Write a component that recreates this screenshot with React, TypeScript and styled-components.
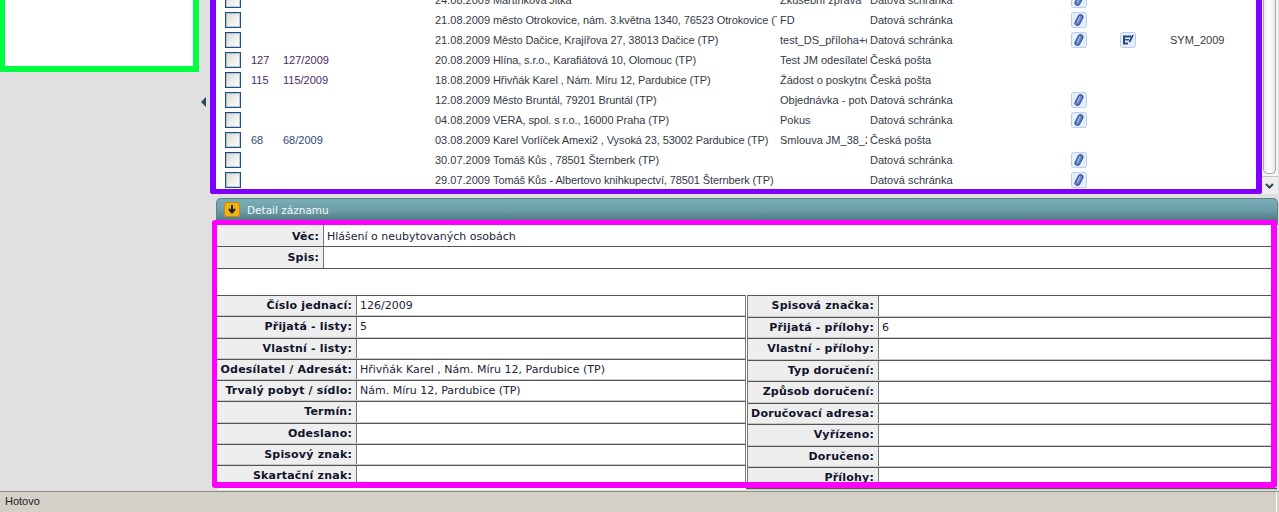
import React from "react";
import styled, { createGlobalStyle } from "styled-components";

const Global = createGlobalStyle`
  html, body { margin: 0; padding: 0; height: 100%; overflow: hidden; background: #e0e0e0; }
  #root { height: 100%; }
`;

const Page = styled.div`
  display: flex;
  flex-direction: column;
  width: 1279px;
  height: 512px;
`;
const Main = styled.div`
  flex: 1;
  min-height: 0;
  display: flex;
  background: #e0e0e0;
`;
const Side = styled.aside`
  width: 199px;
  flex: none;
`;
const SideBox = styled.div`
  box-sizing: border-box;
  width: 199px;
  height: 72px;
  background: #fff;
  border-style: solid;
  border-color: #00ff40;
  border-width: 0 6px 6px 5px;
`;
const Splitter = styled.div`
  width: 11px;
  flex: none;
  display: flex;
  align-items: flex-start;
  justify-content: center;
  padding: 97px 1px 0 0;
  box-sizing: border-box;
`;
const Content = styled.div`
  width: 1069px;
  flex: none;
  display: flex;
  flex-direction: column;
`;
const GridWrap = styled.div`
  display: flex;
  height: 194px;
  flex: none;
`;
const PurpleFrame = styled.div`
  box-sizing: border-box;
  width: 1052px;
  height: 194px;
  flex: none;
  background: #fff;
  border-style: solid;
  border-color: #8000ff;
  border-width: 0 6px 5px 6px;
  border-radius: 0 0 3px 3px;
  overflow: hidden;
  padding-left: 9px;
`;
const Rows = styled.div`
  margin-top: -10px;
`;
const Row = styled.div`
  display: grid;
  grid-template-columns: 26px 32px 152px 58px 287px 90px 201px 49px 50px 1fr;
  height: 20px;
  align-items: center;
  font: 11px/20px "Liberation Sans", Arial, sans-serif;
  color: #333a44;
`;
const Check = styled.span`
  display: block;
  box-sizing: border-box;
  width: 16px;
  height: 16px;
  border: 1px solid #1c5180;
  box-shadow: inset 0 0 0 1px rgba(60, 110, 160, 0.3);
  background: linear-gradient(135deg, #d8d8d3 0%, #efefeb 55%, #fbfbfb 100%);
`;
const Cell = styled.span<{ $tight?: boolean }>`
  white-space: nowrap;
  overflow: hidden;
  display: block;
  margin-right: 3px;
  letter-spacing: ${(p) => (p.$tight ? "-0.1px" : "0")};
`;
const Num = styled.span<{ $c: string }>`
  color: ${(p) => p.$c};
  white-space: nowrap;
`;
const IconBtn = styled.span`
  display: block;
  width: 16px;
  height: 16px;
  line-height: 0;
`;
const Scrollbar = styled.div`
  width: 16px;
  flex: none;
  background: #f4f4f0;
  display: flex;
  flex-direction: column;
  box-sizing: border-box;
  height: 194px;
`;
const ScrollThumb = styled.div`
  flex: 1;
  margin: 0 2px 2px 1px;
  background: linear-gradient(90deg, #ececec, #fdfdfd 50%, #e6e6e6);
  border: 1px solid #a8a8a8;
  border-top: 0;
  border-radius: 0 0 5px 5px;
`;
const ScrollArrow = styled.div`
  box-sizing: border-box;
  height: 18px;
  display: flex;
  align-items: center;
  justify-content: center;
  padding-right: 1px;
  background: #eeeeee;
  border-top: 1px solid #c4c4c4;
`;
const Strip = styled.div`
  box-sizing: border-box;
  height: 27px;
  margin: 4px 1px -5px 6px;
  padding: 0 0 5px 7px;
  flex: none;
  display: flex;
  align-items: center;
  gap: 7px;
  border-radius: 5px 5px 0 0;
  border: 1px solid #5c8088;
  border-bottom: 0;
  background: linear-gradient(180deg, #79aeb7 0%, #6c9ea8 45%, #50757d 85%);
  font: 10.5px "DejaVu Sans", Verdana, sans-serif;
  color: #f2fafa;
`;
const DownBtn = styled.span`
  display: block;
  width: 16px;
  height: 15px;
  line-height: 0;
`;
const MagentaFrame = styled.div`
  position: relative;
  z-index: 1;
  box-sizing: border-box;
  margin-left: 2px;
  width: 1065px;
  height: 268px;
  flex: none;
  background: #fff;
  border-style: solid;
  border-color: #ff00ff;
  border-width: 5px 6px 6px 5px;
  border-radius: 3px;
  overflow: hidden;
  font: 11px "DejaVu Sans", Verdana, sans-serif;
`;
const FrameFoot = styled.div`
  margin-left: 8px;
  width: 1059px;
  height: 2px;
  flex: none;
  display: grid;
  grid-template-columns: 528px 1fr;
`;
const FootLeft = styled.div`
  background: #fff;
`;
const FootRight = styled.div`
  background: #555;
  border-bottom: 1px solid #c8c8c8;
  box-sizing: border-box;
`;
const WideRow = styled.div<{ $lh: number }>`
  display: grid;
  grid-template-columns: 107px 1fr;
  height: 22px;
  border-bottom: 1px solid #555;
  box-sizing: border-box;
  line-height: ${(p) => p.$lh}px;
`;
const Label = styled.div`
  box-sizing: border-box;
  background: #eeeeee;
  font-weight: 700;
  letter-spacing: 0.2px;
  color: #10142c;
  text-align: right;
  padding-right: 4px;
  white-space: nowrap;
  overflow: hidden;
  border-right: 1px solid #777;
`;
const Value = styled.div`
  padding-left: 3px;
  color: #202438;
  white-space: nowrap;
  overflow: hidden;
`;
const Spacer = styled.div`
  height: 26px;
`;
const Columns = styled.div`
  display: grid;
  grid-template-columns: 528px 1fr;
  align-items: start;
`;
const Col = styled.div<{ $right?: boolean }>`
  border-left: ${(p) => (p.$right ? "3px double #777" : "0")};
  height: 240px;
`;
const FormRow = styled.div<{ $lw: number; $h: number }>`
  display: grid;
  grid-template-columns: ${(p) => p.$lw}px 1fr;
  height: ${(p) => p.$h}px;
  line-height: 20px;
  box-sizing: border-box;
  border-top: 1px solid #555;
  border-bottom: 1px solid #c8c8c8;
`;
const StatusBar = styled.footer`
  flex: none;
  box-sizing: border-box;
  height: 21px;
  background: #d4d0c8;
  border-top: 1px solid #8f8c86;
  box-shadow: inset -2px 0 0 #d4d0c8, inset -3px 0 0 #fff;
  padding-left: 5px;
  font: 11px/19px "Liberation Sans", Arial, sans-serif;
  color: #222;
`;

const Clip = () => (
  <svg width="16" height="16" viewBox="0 0 16 16">
    <rect x=".5" y=".5" width="15" height="15" rx="2" fill="#e6eefb" stroke="#b9cdee" />
    <rect x="5.6" y="2.4" width="4.8" height="11.2" rx="2.4" transform="rotate(28 8 8)" fill="#6c8ac2" stroke="#2f53a4" strokeWidth="1.2" />
    <path d="M8.9 4.6 6.3 10.2" stroke="#c8d4ea" strokeWidth=".8" />
  </svg>
);
const Note = () => (
  <svg width="16" height="16" viewBox="0 0 16 16">
    <rect x=".5" y=".5" width="15" height="15" rx="2" fill="#e6eefb" stroke="#b9cdee" />
    <path d="M3 3.5h8v2H5V7h4v1.6H5v1.8h3V12.5H3z" fill="#24468c" />
    <path d="M13.8 3 10.8 9.4l-1.8 1.3.2-2.2L12.2 3z" fill="#1c3c80" />
  </svg>
);

type R = { n?: string; j?: string; c?: string; d: string; s: string; t?: string; ch: string; clip?: boolean; note?: boolean; sym?: string };
const rows: R[] = [
  { d: "24.08.2009", s: "Martínková Jitka", t: "Zkušební zpráva", ch: "Datová schránka", clip: true },
  { d: "21.08.2009", s: "město Otrokovice, nám. 3.května 1340, 76523 Otrokovice (TP)", t: "FD", ch: "Datová schránka", clip: true },
  { d: "21.08.2009", s: "Město Dačice, Krajířova 27, 38013 Dačice (TP)", t: "test_DS_příloha+obsah", ch: "Datová schránka", clip: true, note: true, sym: "SYM_2009" },
  { n: "127", j: "127/2009", c: "#4a2a5a", d: "20.08.2009", s: "Hlína, s.r.o., Karafiátová 10, Olomouc (TP)", t: "Test JM odesílatel", ch: "Česká pošta" },
  { n: "115", j: "115/2009", c: "#4a2a70", d: "18.08.2009", s: "Hřivňák Karel , Nám. Míru 12, Pardubice (TP)", t: "Žádost o poskytnutí", ch: "Česká pošta" },
  { d: "12.08.2009", s: "Město Bruntál, 79201 Bruntál (TP)", t: "Objednávka - potvrzení", ch: "Datová schránka", clip: true },
  { d: "04.08.2009", s: "VERA, spol. s r.o., 16000 Praha (TP)", t: "Pokus", ch: "Datová schránka", clip: true },
  { n: "68", j: "68/2009", c: "#2c4a70", d: "03.08.2009", s: "Karel Vorlíček Amexi2 , Vysoká 23, 53002 Pardubice (TP)", t: "Smlouva JM_38_2009", ch: "Česká pošta" },
  { d: "30.07.2009", s: "Tomáš Kůs , 78501 Šternberk (TP)", ch: "Datová schránka", clip: true },
  { d: "29.07.2009", s: "Tomáš Kůs - Albertovo knihkupectví, 78501 Šternberk (TP)", ch: "Datová schránka", clip: true },
];

const left: [string, string][] = [
  ["Číslo jednací:", "126/2009"],
  ["Přijatá - listy:", "5"],
  ["Vlastní - listy:", ""],
  ["Odesílatel / Adresát:", "Hřivňák Karel , Nám. Míru 12, Pardubice (TP)"],
  ["Trvalý pobyt / sídlo:", "Nám. Míru 12, Pardubice (TP)"],
  ["Termín:", ""],
  ["Odeslano:", ""],
  ["Spisový znak:", ""],
  ["Skartační znak:", ""],
];
const right: [string, string][] = [
  ["Spisová značka:", ""],
  ["Přijatá - přílohy:", "6"],
  ["Vlastní - přílohy:", ""],
  ["Typ doručení:", ""],
  ["Způsob doručení:", ""],
  ["Doručovací adresa:", ""],
  ["Vyřízeno:", ""],
  ["Doručeno:", ""],
  ["Přílohy:", ""],
];

export default function App() {
  return (
    <Page>
      <Global />
      <Main>
        <Side>
          <SideBox />
        </Side>
        <Splitter>
          <svg width="6" height="10" viewBox="0 0 6 10">
            <path d="M5 0v10L0 5z" fill="#2c4850" />
          </svg>
        </Splitter>
        <Content>
          <GridWrap>
            <PurpleFrame>
              <Rows>
                {rows.map((r, i) => (
                  <Row key={i}>
                    <Check />
                    <Num $c={r.c || "#333"}>{r.n}</Num>
                    <Num $c={r.c || "#333"}>{r.j}</Num>
                    <Cell>{r.d}</Cell>
                    <Cell $tight>{r.s}</Cell>
                    <Cell>{r.t}</Cell>
                    <Cell>{r.ch}</Cell>
                    <IconBtn>{r.clip && <Clip />}</IconBtn>
                    <IconBtn>{r.note && <Note />}</IconBtn>
                    <Cell>{r.sym}</Cell>
                  </Row>
                ))}
              </Rows>
            </PurpleFrame>
            <Scrollbar>
              <ScrollThumb />
              <ScrollArrow>
                <svg width="9" height="6" viewBox="0 0 9 6">
                  <path d="M1 1l3.5 3.5L8 1" fill="none" stroke="#2c4850" strokeWidth="2" />
                </svg>
              </ScrollArrow>
            </Scrollbar>
          </GridWrap>
          <Strip>
            <DownBtn>
              <svg width="16" height="15" viewBox="0 0 16 15">
                <rect x=".5" y=".5" width="15" height="14" rx="2" fill="#f0b214" stroke="#c88a10" />
                <path d="M8 3v7M5 7l3 3.5L11 7" fill="none" stroke="#1c2430" strokeWidth="2" />
              </svg>
            </DownBtn>
            Detail záznamu
          </Strip>
          <MagentaFrame>
            <WideRow $lh={24}>
              <Label>Věc:</Label>
              <Value>Hlášení o neubytovaných osobách</Value>
            </WideRow>
            <WideRow $lh={22}>
              <Label>Spis:</Label>
              <Value />
            </WideRow>
            <Spacer />
            <Columns>
              <Col>
                {left.map(([l, v]) => (
                  <FormRow key={l} $lw={140} $h={21.25}>
                    <Label>{l}</Label>
                    <Value>{v}</Value>
                  </FormRow>
                ))}
              </Col>
              <Col $right>
                {right.map(([l, v]) => (
                  <FormRow key={l} $lw={131} $h={21.5}>
                    <Label>{l}</Label>
                    <Value>{v}</Value>
                  </FormRow>
                ))}
              </Col>
            </Columns>
          </MagentaFrame>
          <FrameFoot>
            <FootLeft />
            <FootRight />
          </FrameFoot>
        </Content>
      </Main>
      <StatusBar>Hotovo</StatusBar>
    </Page>
  );
}
